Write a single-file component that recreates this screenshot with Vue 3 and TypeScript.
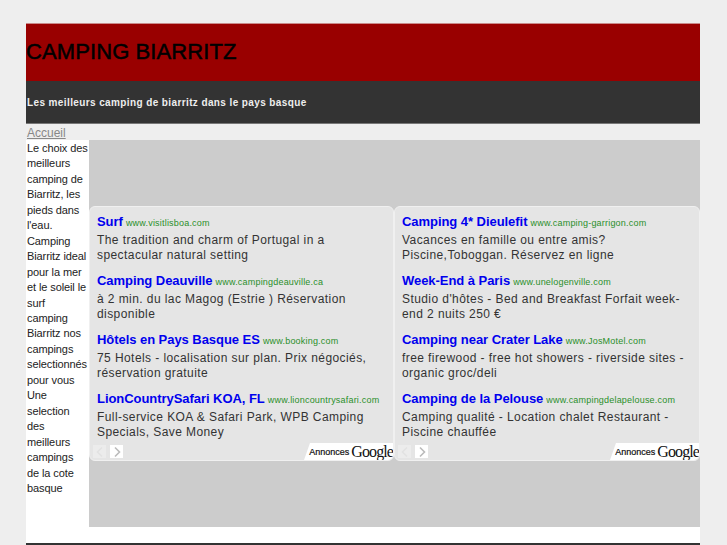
<script setup lang="ts">
interface Ad {
  title: string
  url: string
  text: string
}

const units: Ad[][] = [
  [
    { title: 'Surf', url: 'www.visitlisboa.com', text: 'The tradition and charm of Portugal in a spectacular natural setting' },
    { title: 'Camping Deauville', url: 'www.campingdeauville.ca', text: 'à 2 min. du lac Magog (Estrie ) Réservation disponible' },
    { title: 'Hôtels en Pays Basque ES', url: 'www.booking.com', text: '75 Hotels - localisation sur plan. Prix négociés, réservation gratuite' },
    { title: 'LionCountrySafari KOA, FL', url: 'www.lioncountrysafari.com', text: 'Full-service KOA & Safari Park, WPB Camping Specials, Save Money' },
  ],
  [
    { title: 'Camping 4* Dieulefit', url: 'www.camping-garrigon.com', text: 'Vacances en famille ou entre amis? Piscine,Toboggan. Réservez en ligne' },
    { title: 'Week-End à Paris', url: 'www.unelogenville.com', text: "Studio d'hôtes - Bed and Breakfast Forfait week-end 2 nuits 250 €" },
    { title: 'Camping near Crater Lake', url: 'www.JosMotel.com', text: 'free firewood - free hot showers - riverside sites - organic groc/deli' },
    { title: 'Camping de la Pelouse', url: 'www.campingdelapelouse.com', text: 'Camping qualité - Location chalet Restaurant - Piscine chauffée' },
  ],
]
</script>

<template>
  <div class="page">
    <header class="head">
      <h1>CAMPING BIARRITZ</h1>
    </header>
    <div class="sub">Les meilleurs camping de biarritz dans le pays basque</div>
    <nav class="nav"><a href="#">Accueil</a></nav>
    <div class="main">
      <aside class="side">
        Le choix des meilleurs camping de Biarritz, les pieds dans l'eau. Camping Biarritz ideal pour la mer et le soleil le surf<br />
        camping Biarritz nos campings selectionnés pour vous<br />
        Une selection des meilleurs campings de&nbsp;la cote basque
      </aside>
      <section class="content">
        <div class="units">
          <div v-for="(unit, i) in units" :key="i" class="unit">
            <div class="ads">
              <div v-for="ad in unit" :key="ad.title" class="ad">
                <div class="line"><a class="title" href="#">{{ ad.title }}</a> <span class="url">{{ ad.url }}</span></div>
                <p>{{ ad.text }}</p>
              </div>
            </div>
            <div class="foot">
              <div class="arrows">
                <span class="arrow off">
                  <svg width="10" height="12" viewBox="0 0 10 12"><path d="M7 1.5 2.5 6 7 10.5" fill="none" stroke="#e2e2e2" stroke-width="1.6" /></svg>
                </span>
                <span class="arrow">
                  <svg width="10" height="12" viewBox="0 0 10 12"><path d="M3 1.5 7.500 6 3 10.5" fill="none" stroke="#bbb" stroke-width="1.6" /></svg>
                </span>
              </div>
              <div class="badge">
                <span class="ann">Annonces</span><span class="goog">Google</span>
              </div>
            </div>
          </div>
        </div>
      </section>
    </div>
    <div class="bottom"></div>
    <div class="footer"></div>
  </div>
</template>

<style>
html,
body {
  margin: 0;
  background: #eeeeee;
  overflow: hidden;
}
</style>

<style scoped>
.page {
  width: 674px;
  margin: 0 0 0 26px;
  padding-top: 23px;
  font-family: "Liberation Sans", Arial, sans-serif;
  font-size: 11px;
  line-height: 15.45px;
  color: #222;
}

.head {
  height: 56px;
  padding-bottom: 1px;
  background: #990000;
  border-top: 1px solid #c98a8a;
  display: flex;
  align-items: center;
}

h1 {
  margin: 0;
  font-size: 22px;
  font-weight: normal;
  color: #000;
  letter-spacing: 0.1px;
  -webkit-text-stroke: 0.5px #000;
}

.sub {
  height: 43px;
  background: #333333;
  color: #eee;
  font-size: 10px;
  font-weight: bold;
  line-height: 43px;
  letter-spacing: 0.39px;
  padding-left: 1px;
  border-bottom: 1px solid #777;
  box-sizing: border-box;
}

.nav {
  height: 16px;
  box-sizing: border-box;
  padding: 1px 0 0 1px;
  font-size: 12px;
  line-height: 16px;
}

.nav a {
  color: #888;
}

.main {
  display: flex;
  background: #fff;
}

.side {
  width: 63px;
  flex: none;
  height: 387px;
  box-sizing: border-box;
  padding: 1px 0 0 1px;
  letter-spacing: -0.1px;
}

.content {
  flex: 1;
  min-width: 0;
  height: 387px;
  background: #cccccc;
  display: flex;
  align-items: center;
}

.units {
  display: flex;
  width: 100%;
}

.unit {
  width: 305px;
  height: 255px;
  box-sizing: border-box;
  background: #e5e5e5;
  border: 1px solid #f0f0f0;
  border-radius: 6px;
  display: flex;
  flex-direction: column;
  overflow: hidden;
}

.unit + .unit {
  flex: 1;
}

.ads {
  flex: 1;
  min-height: 0;
  padding: 6px 7px 0 7px;
}

.ad {
  height: 59px;
}

.ad:last-child {
  height: auto;
}

.line {
  height: 18px;
  line-height: 18px;
  white-space: nowrap;
}

.title {
  color: #0000ee;
  font-size: 13px;
  font-weight: bold;
  letter-spacing: -0.05px;
  text-decoration: none;
}

.url {
  color: #2a8f2a;
  font-size: 9px;
  letter-spacing: 0.2px;
}

p {
  margin: 1.5px 0 0;
  font-size: 12px;
  line-height: 15px;
  color: #333;
  letter-spacing: 0.42px;
}

.foot {
  flex: none;
  height: 17px;
  display: flex;
  justify-content: space-between;
}

.arrows {
  display: flex;
  gap: 4px;
  padding: 2px 0 0 3px;
}

.arrow {
  width: 13px;
  height: 13px;
  background: #fff;
  display: flex;
  align-items: center;
  justify-content: center;
}

.arrow.off {
  background: #ececec;
}

.badge {
  width: 89px;
  height: 17px;
  box-sizing: border-box;
  background: #fff;
  clip-path: polygon(6px 0, 100% 0, 100% 100%, 0 100%);
  display: flex;
  align-items: center;
  justify-content: flex-end;
  white-space: nowrap;
  color: #111;
}

.ann {
  font-size: 9px;
  margin: 2px 2px 0 0;
  -webkit-text-stroke: 0.2px #111;
}

.goog {
  font-family: "Liberation Serif", serif;
  font-size: 16px;
  letter-spacing: -0.9px;
}

.bottom {
  height: 16px;
  background: #fff;
}

.footer {
  height: 10px;
  background: #333;
}
</style>
